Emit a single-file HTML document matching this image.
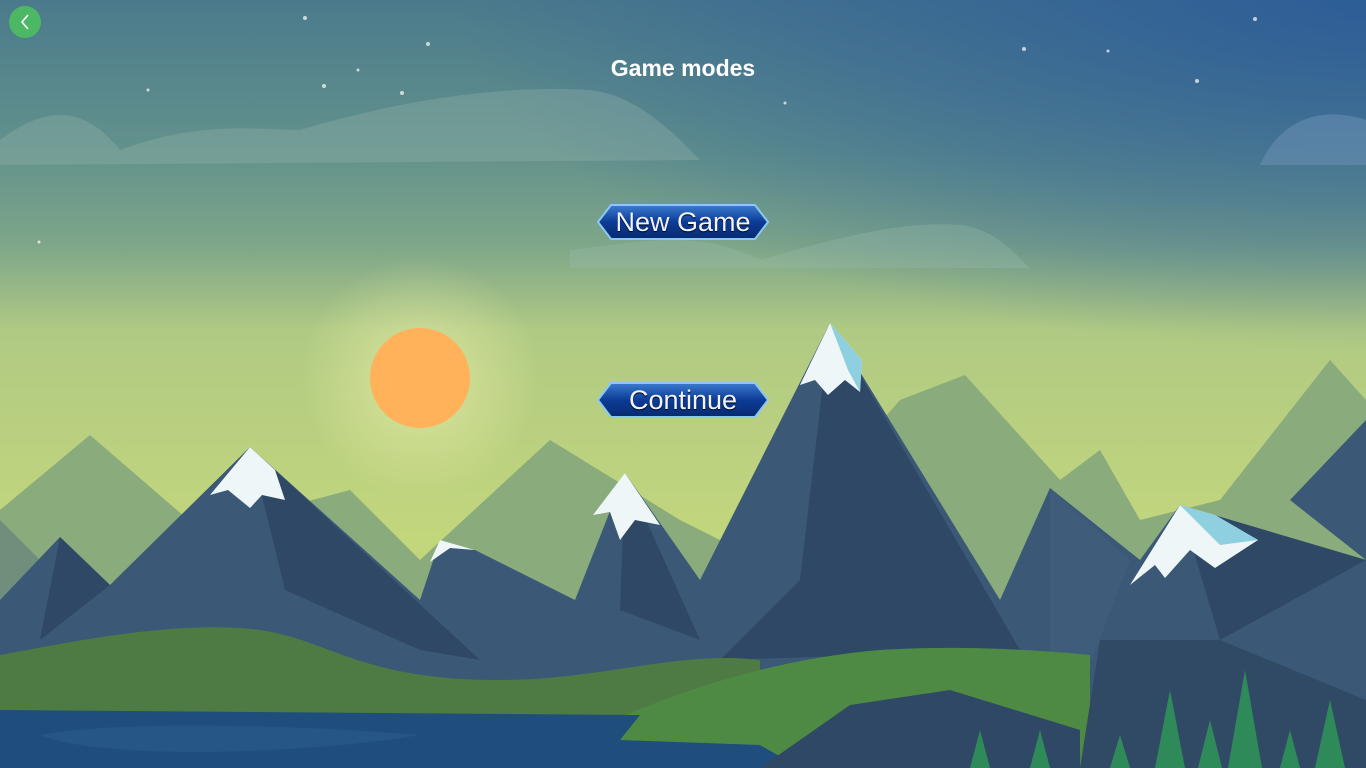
<!DOCTYPE html>
<html><head><meta charset="utf-8"><style>
html,body{margin:0;padding:0;width:1366px;height:768px;overflow:hidden;font-family:"Liberation Sans",sans-serif}
svg{position:absolute;left:0;top:0}
.title{position:absolute;top:55px;left:0;width:1366px;text-align:center;color:#fff;font-weight:bold;font-size:23px}
.btn{position:absolute;left:597px;width:172px;height:36px}
.btn span{position:absolute;left:0;top:0;width:172px;text-align:center;line-height:36px;color:#f0f4ff;font-size:27px;text-shadow:0 1px 1px #001}
.back{position:absolute;left:9px;top:6px;width:32px;height:32px;border-radius:50%;background:#4cb865}
</style></head><body>
<svg width="1366" height="768" viewBox="0 0 1366 768">
<defs>
<linearGradient id="sky" x1="0" y1="0" x2="0" y2="1">
<stop offset="0" stop-color="#4b7a8c"/>
<stop offset="0.2" stop-color="#63928c"/>
<stop offset="0.32" stop-color="#7ea689"/>
<stop offset="0.43" stop-color="#b0ca83"/>
<stop offset="0.7" stop-color="#c2d67c"/>
<stop offset="1" stop-color="#b8d27a"/>
</linearGradient>
<radialGradient id="skyr" cx="1366" cy="0" r="700" gradientUnits="userSpaceOnUse" gradientTransform="translate(1366 0) scale(1.3 0.5) translate(-1366 0)">
<stop offset="0" stop-color="#2a5a98" stop-opacity="0.9"/>
<stop offset="0.6" stop-color="#2a5a98" stop-opacity="0.4"/>
<stop offset="1" stop-color="#2a5a98" stop-opacity="0"/>
</radialGradient>
<radialGradient id="glow" cx="420" cy="378" r="120" gradientUnits="userSpaceOnUse">
<stop offset="0" stop-color="#f4f4b0" stop-opacity="0.6"/>
<stop offset="1" stop-color="#f4f4b0" stop-opacity="0"/>
</radialGradient>
<linearGradient id="bt" x1="0" y1="0" x2="0" y2="1">
<stop offset="0" stop-color="#3c7cd0"/><stop offset="0.5" stop-color="#0c3c96"/><stop offset="1" stop-color="#082a70"/>
</linearGradient>
</defs>
<rect width="1366" height="768" fill="url(#sky)"/>
<rect width="1366" height="400" fill="url(#skyr)"/>
<path d="M0 140 C40 110 80 100 120 150 C200 120 260 130 300 130 C400 100 500 85 590 90 C640 95 680 140 700 160 L0 165Z" fill="#9ab8b0" opacity="0.3"/>
<path d="M570 250 C650 240 700 230 760 260 C830 240 900 220 960 225 C1000 230 1020 260 1030 268 L570 268Z" fill="#9cbcae" opacity="0.3"/>
<path d="M1260 165 C1280 120 1320 105 1366 120 L1366 165Z" fill="#7a9cc0" opacity="0.4"/>
<circle cx="420" cy="378" r="120" fill="url(#glow)"/>
<circle cx="420" cy="378" r="50" fill="#ffb25a"/>
<path d="M0 510 L90 435 L200 530 L350 490 L420 560 L550 440 L680 520 L760 560 L900 400 L965 375 L1060 480 L1100 450 L1140 520 L1220 500 L1330 360 L1366 400 L1366 768 L0 768Z" fill="#8aab7c"/>
<path d="M0 520 L40 560 L0 600Z" fill="#6f8f7c"/>
<path d="M0 600 L60 537 L110 585 L250 447 L420 600 L440 540 L475 550 L575 600 L625 473 L700 580 L830 323 L1000 600 L1050 488 L1140 560 L1180 505 L1366 560 L1366 768 L0 768Z" fill="#3b5877"/>
<path d="M250 447 L285 590 L420 650 L480 660Z M830 323 L800 580 L720 660 L1020 650Z M625 473 L620 610 L700 640Z M1180 505 L1220 640 L1366 560Z M60 537 L40 640 L110 585Z" fill="#2f4866"/>
<path d="M1290 500 L1366 420 L1366 560Z" fill="#3b5877"/>
<path d="M1050 488 L1130 560 L1050 768Z" fill="#3f5d7a"/>
<path d="M830 323 L800 385 L815 380 L828 395 L845 380 L860 392 L862 360Z" fill="#eef6f8"/>
<path d="M830 323 L862 360 L860 392 L848 370Z" fill="#8ed0e0"/>
<path d="M250 447 L210 495 L228 490 L250 508 L262 495 L285 500 L275 470Z" fill="#eef6f8"/>
<path d="M625 473 L593 515 L610 512 L620 540 L635 520 L660 525Z" fill="#eef6f8"/>
<path d="M440 540 L430 562 L450 548 L475 550Z" fill="#eef6f8"/>
<path d="M1180 505 L1130 585 L1155 565 L1165 578 L1190 550 L1215 568 L1258 540 L1215 515Z" fill="#eef6f8"/>
<path d="M1180 505 L1215 515 L1258 540 L1220 545 Z" fill="#8ed0e0"/>
<path d="M0 655 C80 640 180 620 260 630 C330 640 360 680 500 680 C600 680 680 650 760 660 L760 720 L0 720Z" fill="#4e7a44"/>
<path d="M560 745 C650 700 760 660 880 650 C960 645 1040 650 1090 655 L1090 768 L560 768Z" fill="#4f8a44"/>
<path d="M0 710 L640 715 L620 740 L760 745 L800 768 L0 768Z" fill="#1f4e7c"/>
<path d="M40 735 C120 720 300 725 420 735 C300 755 100 760 40 735Z" fill="#2a5a88" opacity="0.7"/>
<path d="M760 768 L850 705 L950 690 L1080 730 L1080 768Z" fill="#2f4866"/>
<path d="M1080 768 L1100 640 L1220 640 L1366 700 L1366 768Z" fill="#304a66"/>
<g fill="#2f8a5a">
<path d="M1170 690 L1185 768 L1155 768Z M1245 670 L1262 768 L1228 768Z M1330 700 L1345 768 L1315 768Z M1210 720 L1222 768 L1198 768Z M1290 730 L1300 768 L1280 768Z M1120 735 L1130 768 L1110 768Z M980 730 L990 768 L970 768Z M1040 730 L1050 768 L1030 768Z"/>
</g>
<g fill="#fff" opacity="0.7">
<circle cx="305" cy="18" r="2"/><circle cx="428" cy="44" r="2"/><circle cx="324" cy="86" r="2"/><circle cx="402" cy="93" r="2"/><circle cx="1024" cy="49" r="2"/><circle cx="1197" cy="81" r="2"/><circle cx="1255" cy="19" r="2"/><circle cx="148" cy="90" r="1.5"/><circle cx="39" cy="242" r="1.5"/><circle cx="358" cy="70" r="1.5"/><circle cx="1108" cy="51" r="1.5"/><circle cx="785" cy="103" r="1.5"/>
</g>
</svg>
<div class="back"><svg width="32" height="32" viewBox="0 0 32 32"><path d="M19 9 L13 16 L19 23" stroke="#fff" stroke-width="1.6" fill="none"/></svg></div>
<div class="title">Game modes</div>
<div class="btn" style="top:204px"><svg width="172" height="36"><path d="M14 1 L158 1 L171 18 L158 35 L14 35 L1 18Z" fill="url(#bt)" stroke="#8cc8f0" stroke-width="2"/></svg><span>New Game</span></div>
<div class="btn" style="top:382px"><svg width="172" height="36"><path d="M14 1 L158 1 L171 18 L158 35 L14 35 L1 18Z" fill="url(#bt)" stroke="#8cc8f0" stroke-width="2"/></svg><span>Continue</span></div>
</body></html>
